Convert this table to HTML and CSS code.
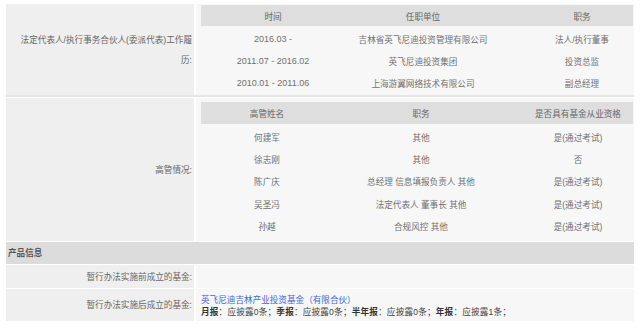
FILE: index.html
```html
<!DOCTYPE html>
<html lang="zh-CN">
<head>
<meta charset="utf-8">
<title>基金管理人信息</title>
<link rel="stylesheet" href="styles.css">
</head>
<body>
<div class="sheet">
  <div class="row sec1">
    <div class="label">法定代表人/执行事务合伙人(委派代表)工作履<br>历:</div>
    <div class="value">
      <div class="grid g1">
        <div class="th">时间</div><div class="th">任职单位</div><div class="th c3">职务</div>
        <div class="td num">2016.03 -</div><div class="td">吉林省英飞尼迪投资管理有限公司</div><div class="td c3">法人/执行董事</div>
        <div class="td num">2011.07 - 2016.02</div><div class="td">英飞尼迪投资集团</div><div class="td c3">投资总监</div>
        <div class="td num">2010.01 - 2011.06</div><div class="td">上海游翼网络技术有限公司</div><div class="td c3">副总经理</div>
      </div>
    </div>
  </div>
  <div class="row sec2">
    <div class="label">高管情况:</div>
    <div class="value">
      <div class="grid g2">
        <div class="th">高管姓名</div><div class="th">职务</div><div class="th c3">是否具有基金从业资格</div>
        <div class="td">何建军</div><div class="td">其他</div><div class="td c3">是(通过考试)</div>
        <div class="td">徐志刚</div><div class="td">其他</div><div class="td c3">否</div>
        <div class="td">陈广庆</div><div class="td">总经理 信息填报负责人 其他</div><div class="td c3">是(通过考试)</div>
        <div class="td">吴圣冯</div><div class="td">法定代表人 董事长 其他</div><div class="td c3">是(通过考试)</div>
        <div class="td">孙越</div><div class="td">合规风控 其他</div><div class="td c3">是(通过考试)</div>
      </div>
    </div>
  </div>
  <div class="section-title">产品信息</div>
  <div class="row sec3">
    <div class="label">暂行办法实施前成立的基金:</div>
    <div class="value"></div>
  </div>
  <div class="row sec4">
    <div class="label">暂行办法实施后成立的基金:</div>
    <div class="value fund">
      <a class="fund-link" href="#">英飞尼迪吉林产业投资基金（有限合伙）</a>
      <div class="reports"><b>月报</b>：应披露0条；<b>季报</b>：应披露0条；<b>半年报</b>：应披露0条；<b>年报</b>：应披露1条；</div>
    </div>
  </div>
</div>
</body>
</html>
```

FILE: styles.css
```css
* { box-sizing: border-box; }
html, body { margin: 0; padding: 0; background: #ffffff; }
body {
  font-family: "Liberation Sans", "Noto Sans CJK SC", sans-serif;
  font-size: 8.6px;
  color: #6a6a6a;
}
.sheet {
  width: 628px;
  margin: 4px 0 0 6px;
  display: flex;
  flex-direction: column;
  gap: 1px;
}
.row {
  display: grid;
  grid-template-columns: 188px 1fr;
  column-gap: 2px;
}
.label {
  background: #efefef;
  text-align: right;
  padding-right: 2px;
  line-height: 20px;
  display: flex;
  align-items: center;
  justify-content: flex-end;
  color: #666;
}
.value {
  background: #f7f7f7;
}
.sec1 { height: 93px; border-bottom: 2px solid #e6e6e6; }
.sec1 .value { padding: 1px 1px 0 5px; }
.sec2 { height: 143px; }
.sec2 .value { padding: 4px 1px 0 5px; }
.grid {
  display: grid;
  text-align: center;
}
.g1 { grid-template-columns: 144px 156px 1fr; grid-template-rows: 21px repeat(3, 22px); }
.g2 { grid-template-columns: 132px 176px 1fr; grid-template-rows: 22px repeat(5, 22.3px); }
.th {
  background: #dedede;
  display: flex;
  align-items: center;
  justify-content: center;
  color: #666;
}
.td {
  display: flex;
  align-items: center;
  justify-content: center;
  padding-top: 3px;
  color: #707070;
}
.c3 { padding-left: 30px; }
.g2 .c3 { padding-left: 14px; }
.num { font-size: 9px; }
.section-title {
  background: #dcdcdc;
  height: 22px;
  line-height: 22px;
  padding-left: 2px;
  font-weight: bold;
  color: #555;
}
.sec3 { height: 23px; }
.sec4 { height: 32px; }
.fund {
  padding: 5px 0 0 5px;
  line-height: 12px;
}
.fund-link {
  color: #4466d4;
  text-decoration: none;
}
.reports { color: #444; letter-spacing: 0.2px; }
.reports b { color: #333; }
```
